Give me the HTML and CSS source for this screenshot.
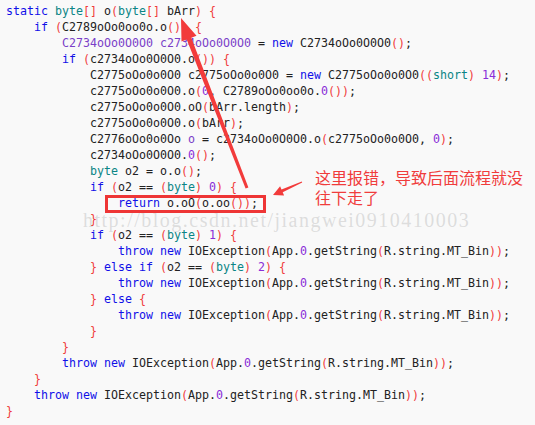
FILE: index.html
```html
<!DOCTYPE html>
<html lang="zh">
<head>
  <meta charset="UTF-8">
  <title>code</title>
  <link rel="stylesheet" href="styles.css">
</head>
<body>
  <div class="shot">
<pre class="code"><span class="k">static</span> <span class="t">byte</span><span class="p">[]</span> o<span class="p">(</span><span class="t">byte</span><span class="p">[]</span> bArr<span class="p">)</span> <span class="p">{</span>
    <span class="k">if</span> <span class="p">(</span>C2789oOo0oo0o.o<span class="p">()</span><span class="p">)</span> <span class="p">{</span>
        <span class="v">C2734oOo0O0O0 c2734oOo0O0O0</span> = <span class="k">new</span> C2734oOo0O0O0<span class="p">()</span>;
        <span class="k">if</span> <span class="p">(</span>c2734oOo0O0O0.o<span class="p">()</span><span class="p">)</span> <span class="p">{</span>
            C2775oOo0o0O0 c2775oOo0o0O0 = <span class="k">new</span> C2775oOo0o0O0<span class="p">((</span><span class="t">short</span><span class="p">)</span> <span class="n">14</span><span class="p">)</span>;
            c2775oOo0o0O0.o<span class="p">(</span><span class="n">0</span>, C2789oOo0oo0o.<span class="n">0</span><span class="p">())</span>;
            c2775oOo0o0O0.oO<span class="p">(</span>bArr.length<span class="p">)</span>;
            c2775oOo0o0O0.o<span class="p">(</span>bArr<span class="p">)</span>;
            C2776oOo0o0Oo <span class="v">o</span> = c2734oOo0O0O0.o<span class="p">(</span>c2775oOo0o0O0, <span class="n">0</span><span class="p">)</span>;
            c2734oOo0O0O0.<span class="n">0</span><span class="p">()</span>;
            <span class="t">byte</span> o2 = o.o<span class="p">()</span>;
            <span class="k">if</span> <span class="p">(</span>o2 == <span class="p">(</span><span class="t">byte</span><span class="p">)</span> <span class="n">0</span><span class="p">)</span> <span class="p">{</span>
                <span class="k">return</span> o.oO<span class="p">(</span>o.oo<span class="p">())</span>;
            <span class="p">}</span>
            <span class="k">if</span> <span class="p">(</span>o2 == <span class="p">(</span><span class="t">byte</span><span class="p">)</span> <span class="n">1</span><span class="p">)</span> <span class="p">{</span>
                <span class="k">throw</span> <span class="k">new</span> IOException<span class="p">(</span>App.<span class="n">0</span>.getString<span class="p">(</span>R.string.MT_Bin<span class="p">))</span>;
            <span class="p">}</span> <span class="k">else</span> <span class="k">if</span> <span class="p">(</span>o2 == <span class="p">(</span><span class="t">byte</span><span class="p">)</span> <span class="n">2</span><span class="p">)</span> <span class="p">{</span>
                <span class="k">throw</span> <span class="k">new</span> IOException<span class="p">(</span>App.<span class="n">0</span>.getString<span class="p">(</span>R.string.MT_Bin<span class="p">))</span>;
            <span class="p">}</span> <span class="k">else</span> <span class="p">{</span>
                <span class="k">throw</span> <span class="k">new</span> IOException<span class="p">(</span>App.<span class="n">0</span>.getString<span class="p">(</span>R.string.MT_Bin<span class="p">))</span>;
            <span class="p">}</span>
        <span class="p">}</span>
        <span class="k">throw</span> <span class="k">new</span> IOException<span class="p">(</span>App.<span class="n">0</span>.getString<span class="p">(</span>R.string.MT_Bin<span class="p">))</span>;
    <span class="p">}</span>
    <span class="k">throw</span> <span class="k">new</span> IOException<span class="p">(</span>App.<span class="n">0</span>.getString<span class="p">(</span>R.string.MT_Bin<span class="p">))</span>;
<span class="p">}</span></pre>

    <div class="watermark">http://blog.csdn.net/jiangwei0910410003</div>
    <div class="mark-box"></div>
    <div class="note">这里报错，导致后面流程就没<br>往下走了</div>

    <svg class="arrows" width="535" height="425" viewBox="0 0 535 425">
      <polygon points="181,18 196.5,35.7 191.3,37.7 248.4,187.5 245.6,188.5 186.7,39.5 181.5,41.5" />
      <polygon points="273,195 280.1,186.3 281.5,189.5 301.8,181.5 302.2,182.5 282.7,192.3 284.1,195.5" />
    </svg>
  </div>
</body>
</html>
```

FILE: styles.css
```css
body {
  margin: 0;
  background-color: #f9f9f9;
}

.shot {
  position: relative;
  width: 535px;
  height: 425px;
  overflow: hidden;
  background-color: #f9f9f9;
}

.code {
  margin: 0;
  padding: 3px 0 0 6px;
  font-family: "DejaVu Sans Mono", "Liberation Mono", monospace;
  font-size: 11.63px;
  line-height: 16px;
  color: #222;
}

.k { color: #1010e8; }
.t { color: #0a8585; }
.p { color: #f03c3c; }
.n { color: #8a2ed8; }
.v { color: #7a3fc8; }

.watermark {
  position: absolute;
  left: 83px;
  top: 209px;
  font-family: "Liberation Serif", serif;
  font-size: 20px;
  letter-spacing: 1.5px;
  color: rgba(185, 185, 185, 0.45);
  white-space: nowrap;
}

.mark-box {
  position: absolute;
  left: 105px;
  top: 195px;
  width: 155px;
  height: 12px;
  border: 3px solid #ee3535;
}

.note {
  position: absolute;
  left: 315px;
  top: 167px;
  font-family: "Noto Sans CJK SC", sans-serif;
  font-size: 16px;
  line-height: 20px;
  color: #f03c3c;
}

.arrows {
  position: absolute;
  left: 0;
  top: 0;
}

.arrows polygon {
  fill: #f23b3b;
}
```
